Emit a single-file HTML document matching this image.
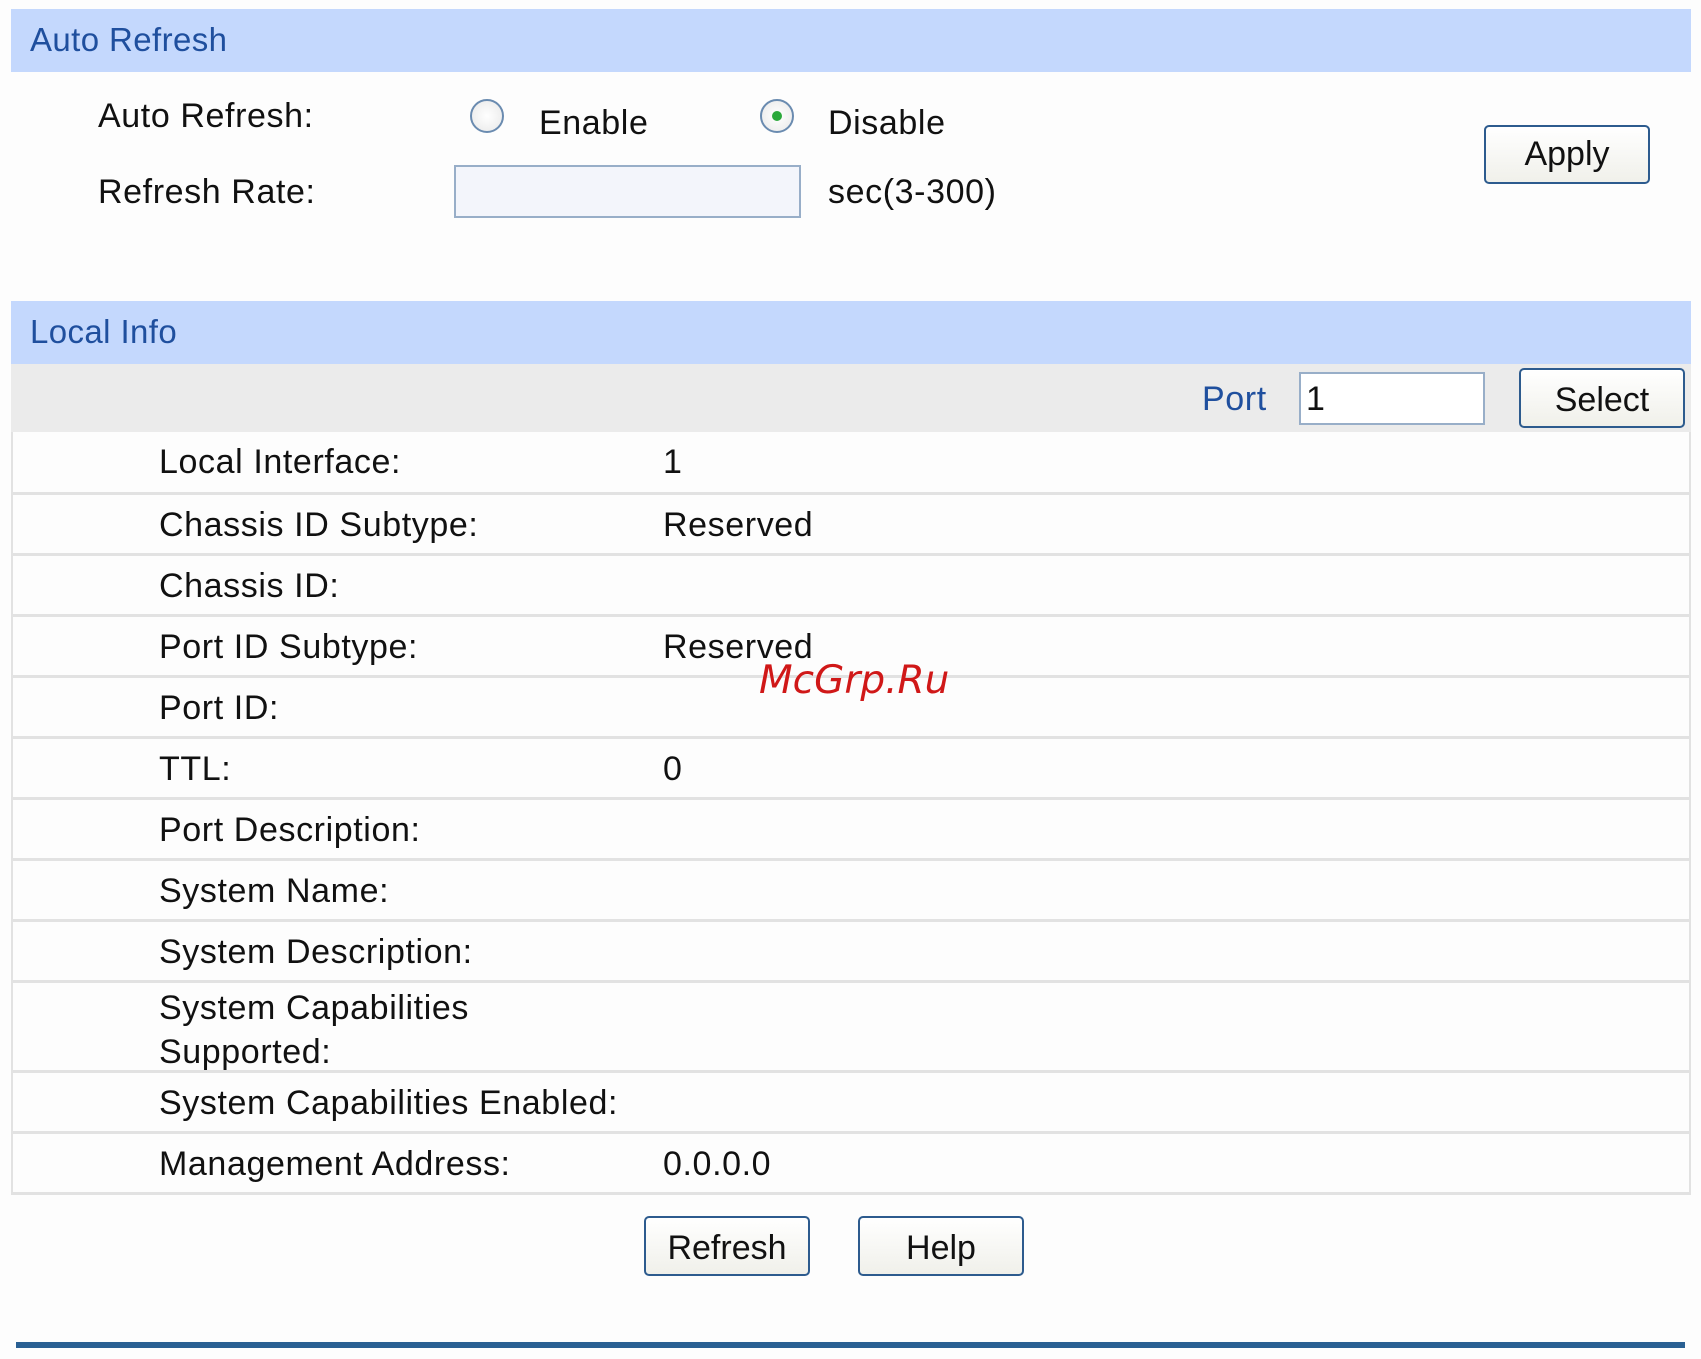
<!DOCTYPE html>
<html><head><meta charset="utf-8"><style>
body{margin:0;width:1701px;height:1359px;background:#fdfdfd;position:relative;font-family:"Liberation Sans",sans-serif;overflow:hidden}
.a{position:absolute;white-space:nowrap}
.hdr{position:absolute;left:11px;width:1680px;background:#c4d8fd;height:63px}
.hdr span{position:absolute;left:19px;top:12px;font-size:33px;color:#1f4f9e;letter-spacing:0.4px}
.t{font-size:34px;color:#111;line-height:40px;letter-spacing:0.6px}
.btn{position:absolute;border:2px solid #2d5b8e;border-radius:5px;background:linear-gradient(#fff,#f0f0ea);box-sizing:border-box;font-size:34px;text-align:center;color:#111}
.radio{position:absolute;width:34px;height:34px;border-radius:50%;border:2px solid #6a8bb0;box-sizing:border-box;background:radial-gradient(#fff,#e8e8e8)}
.row{position:absolute;left:11px;width:1680px;height:61px;border-bottom:3px solid #e2e2e2;box-sizing:border-box}
.row .l{position:absolute;left:148px;top:10px}
.row .v{position:absolute;left:652px;top:10px}
</style></head><body>
<div class="hdr" style="top:9px"><span>Auto Refresh</span></div>
<div class="a t" style="left:98px;top:96px">Auto Refresh:</div>
<div class="radio" style="left:470px;top:99px"></div>
<div class="a t" style="left:539px;top:103px">Enable</div>
<div class="radio" style="left:760px;top:99px"><div style="position:absolute;left:10px;top:10px;width:10px;height:10px;border-radius:50%;background:#2aa83a"></div></div>
<div class="a t" style="left:828px;top:103px">Disable</div>
<div class="a t" style="left:98px;top:172px">Refresh Rate:</div>
<div class="a" style="left:454px;top:165px;width:347px;height:53px;border:2px solid #98aec8;box-sizing:border-box;background:#f3f5fb"></div>
<div class="a t" style="left:828px;top:172px">sec(3-300)</div>
<div class="btn" style="left:1484px;top:125px;width:166px;height:59px;line-height:55px">Apply</div>

<div class="hdr" style="top:301px"><span>Local Info</span></div>
<div class="a" style="left:11px;top:364px;width:1680px;height:68px;background:#ebebeb"></div>
<div class="a t" style="left:1202px;top:379px;color:#1f4f9e">Port</div>
<div class="a" style="left:1299px;top:372px;width:186px;height:53px;border:2px solid #98aec8;box-sizing:border-box;background:#fff"></div>
<div class="a t" style="left:1306px;top:379px">1</div>
<div class="btn" style="left:1519px;top:368px;width:166px;height:60px;line-height:60px">Select</div>

<div class="a" style="left:11px;top:432px;width:1680px;height:762px;border-left:2px solid #e2e2e2;border-right:2px solid #e2e2e2;box-sizing:border-box"></div>
<div class="row t" style="top:432px;height:63px"><span class="l">Local Interface:</span><span class="v">1</span></div>
<div class="row t" style="top:495px"><span class="l">Chassis ID Subtype:</span><span class="v">Reserved</span></div>
<div class="row t" style="top:556px"><span class="l">Chassis ID:</span></div>
<div class="row t" style="top:617px"><span class="l">Port ID Subtype:</span><span class="v">Reserved</span></div>
<div class="row t" style="top:678px"><span class="l">Port ID:</span></div>
<div class="row t" style="top:739px"><span class="l">TTL:</span><span class="v">0</span></div>
<div class="row t" style="top:800px"><span class="l">Port Description:</span></div>
<div class="row t" style="top:861px"><span class="l">System Name:</span></div>
<div class="row t" style="top:922px"><span class="l">System Description:</span></div>
<div class="row t" style="top:983px;height:90px"><span class="l" style="top:3px;line-height:44px">System Capabilities<br>Supported:</span></div>
<div class="row t" style="top:1073px"><span class="l">System Capabilities Enabled:</span></div>
<div class="row t" style="top:1134px"><span class="l">Management Address:</span><span class="v">0.0.0.0</span></div>

<div class="a" style="left:759px;top:658px;font-family:'DejaVu Sans',sans-serif;font-style:italic;font-size:39px;color:#d01818">McGrp.Ru</div>

<div class="btn" style="left:644px;top:1216px;width:166px;height:60px;line-height:60px">Refresh</div>
<div class="btn" style="left:858px;top:1216px;width:166px;height:60px;line-height:60px">Help</div>
<div class="a" style="left:16px;top:1342px;width:1669px;height:6px;background:#2a6093"></div>
</body></html>
